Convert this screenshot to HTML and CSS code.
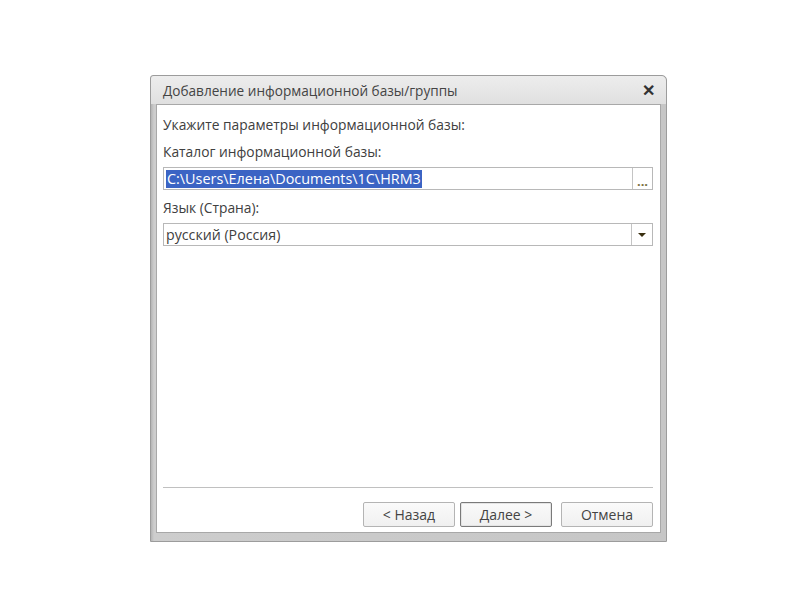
FILE: index.html
```html
<!DOCTYPE html>
<html lang="ru">
<head>
    <meta charset="UTF-8">
    <title>Добавление информационной базы/группы</title>
    <link rel="stylesheet" href="styles.css">
</head>
<body>
    <div class="dialog">
        <div class="title-bar">
            <span class="title">Добавление информационной базы/группы</span>
            <span class="close">&#x2715;</span>
        </div>
        <div class="content">
            <div class="label first">Укажите параметры информационной базы:</div>
            <div class="label">Каталог информационной базы:</div>
            <div class="field">
                <span class="field-value"><span class="selected">C:\Users\Елена\Documents\1C\HRM3</span></span>
                <span class="field-btn dots">...</span>
            </div>
            <div class="label">Язык (Страна):</div>
            <div class="field">
                <span class="field-value">русский (Россия)</span>
                <span class="field-btn"><span class="arrow"></span></span>
            </div>
            <div class="spacer"></div>
            <div class="separator"></div>
            <div class="buttons">
                <button class="btn">&lt; Назад</button>
                <button class="btn default">Далее &gt;</button>
                <button class="btn cancel">Отмена</button>
            </div>
        </div>
    </div>
</body>
</html>
```

FILE: styles.css
```css
body {
    margin: 0;
    padding: 75px 0 0 150px;
    background-color: #fff;
    font-family: "Open Sans", "Liberation Sans", sans-serif;
    font-size: 13.8px;
    color: #404040;
}
.dialog {
    box-sizing: border-box;
    width: 517px;
    height: 467px;
    border: 1px solid #9c9c9c;
    border-radius: 3px 5px 0 0;
    background: linear-gradient(to right, #b4b4b4, #cdcdcd 3px, #c6c6c6);
    display: flex;
    flex-direction: column;
    padding: 0 5px 8px 5px;
}
.title-bar {
    height: 28px;
    display: flex;
    align-items: center;
    justify-content: space-between;
    background: linear-gradient(#ededed, #e0e0e0);
    margin: 0 -5px;
    padding: 0 11px 0 12px;
    border-radius: 3px 5px 0 0;
}
.title {
    font-size: 13.6px;
    color: #444;
}
.close {
    font-size: 16px;
    font-weight: bold;
    color: #333;
}
.content {
    flex: 1;
    background-color: #fff;
    border: 1px solid #a8a8a8;
    display: flex;
    flex-direction: column;
    padding: 0 7px 5px 6px;
}
.label {
    line-height: 18px;
    margin-top: 9px;
}
.label.first {
    margin-top: 11px;
}
.field {
    height: 23px;
    margin-top: 6px;
    border: 1px solid #b8b8b8;
    box-sizing: border-box;
    display: flex;
    align-items: stretch;
}
.field-value {
    flex: 1;
    display: flex;
    align-items: center;
    padding-left: 2px;
    font-size: 14.2px;
}
.selected {
    background-color: #3b64c4;
    color: #fff;
    padding: 0 1px;
    line-height: 18px;
    font-size: 14.4px;
}
.field-btn {
    width: 20px;
    border-left: 1px solid #c4c4c4;
    display: flex;
    align-items: center;
    justify-content: center;
}
.dots {
    color: #7a7040;
    font-size: 13px;
    font-weight: bold;
    padding-top: 4px;
    box-sizing: border-box;
}
.arrow {
    width: 0;
    height: 0;
    border-left: 4px solid transparent;
    border-right: 4px solid transparent;
    border-top: 4px solid #3a2f10;
}
.spacer {
    flex: 1;
}
.separator {
    border-top: 1px solid #c0c0c0;
    margin-bottom: 14px;
}
.buttons {
    display: flex;
    justify-content: flex-end;
}
.btn {
    width: 92px;
    height: 25px;
    font-family: inherit;
    font-size: 14px;
    color: #444;
    background: linear-gradient(#fafafa, #f0f0f0);
    border: 1px solid #b4b4b4;
    border-radius: 2px;
    padding: 0;
}
.btn.default {
    margin-left: 5px;
    border: 1px solid #7a7a7a;
    box-shadow: inset 0 0 0 1px #e4e4e4;
}
.btn.cancel {
    margin-left: 9px;
}
```
